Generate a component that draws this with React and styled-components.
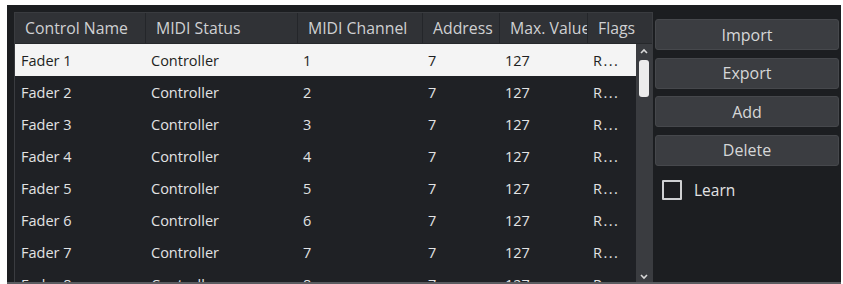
import React from "react";
import styled, { createGlobalStyle } from "styled-components";

const Global = createGlobalStyle`
  html, body { margin: 0; padding: 0; background: #ffffff; }
  body { font-family: "Open Sans", "Noto Sans", sans-serif; }
  * { box-sizing: border-box; }
`;

const Panel = styled.div`
  margin: 5px 2px 0 7px;
  height: 279px;
  background: #1c1e21;
  border-bottom: 2px solid #5a5c60;
  display: flex;
  align-items: flex-start;
  padding: 7px 0 0 7px;
  gap: 2px;
  overflow: hidden;
`;

const TableFrame = styled.div`
  width: 639px;
  height: 275px;
  border: 1px solid #3a3c40;
  border-bottom: none;
  background: #1f2125;
  display: flex;
  flex-direction: column;
  overflow: hidden;
`;

const cols = [131, 152, 125, 77, 88, 48];

const HeaderRow = styled.div`
  display: flex;
  height: 31px;
  background: #303236;
  border-bottom: 1px solid #26282b;
  flex-shrink: 0;
`;

const HeaderCell = styled.div`
  width: ${(p) => p.$w}px;
  flex: ${(p) => (p.$grow ? "1" : "none")};
  padding-left: 10px;
  display: flex;
  align-items: center;
  font-size: 15.8px;
  color: #cfd0d2;
  white-space: nowrap;
  overflow: hidden;
  border-right: ${(p) => (p.$grow ? "none" : "1px solid #24262a")};
`;

const Body = styled.div`
  display: flex;
  flex: 1;
  min-height: 0;
`;

const Rows = styled.div`
  width: 621px;
  display: flex;
  flex-direction: column;
`;

const Row = styled.div`
  display: flex;
  height: 32px;
  flex-shrink: 0;
  background: ${(p) => (p.$selected ? "#f4f4f4" : "transparent")};
  color: ${(p) => (p.$selected ? "#1e1f22" : "#e2e3e4")};
`;

const Cell = styled.div`
  width: ${(p) => p.$w}px;
  flex: none;
  padding-left: ${(p) => (p.$first ? 6 : 5)}px;
  display: flex;
  align-items: center;
  font-size: 14.5px;
  white-space: nowrap;
  overflow: hidden;
  letter-spacing: ${(p) => (p.$spaced ? "1.5px" : "normal")};
`;

const ScrollBar = styled.div`
  width: 16px;
  background: #3a3c40;
  display: flex;
  flex-direction: column;
  align-items: center;
  padding-top: 3px;
`;

const Arrow = styled.svg`
  width: 10px;
  height: 8px;
  flex-shrink: 0;
`;

const Thumb = styled.div`
  width: 10px;
  height: 37px;
  margin-top: 5px;
  border-radius: 3px;
  background: #ececec;
`;

const DownArrow = styled(Arrow)`
  margin-top: auto;
  margin-bottom: 6px;
`;

const Side = styled.div`
  width: 184px;
  padding-top: 7px;
  display: flex;
  flex-direction: column;
  gap: 7.5px;
`;

const Button = styled.button`
  height: 31px;
  background: #3b3d41;
  border: 1px solid #46484c;
  border-radius: 3px;
  color: #d6d7d8;
  font-family: "Open Sans", "Noto Sans", sans-serif;
  font-size: 16px;
  padding: 0;
  display: flex;
  align-items: center;
  justify-content: center;
`;

const LearnRow = styled.label`
  display: flex;
  align-items: center;
  gap: 12px;
  padding-left: 7px;
  margin-top: 5.5px;
  font-size: 15.5px;
  color: #e2e3e4;
`;

const Box = styled.span`
  width: 20px;
  height: 20px;
  border: 2px solid #cfd0d2;
  background: #1c1d20;
  border-radius: 1px;
`;

const headers = ["Control Name", "MIDI Status", "MIDI Channel", "Address", "Max. Value", "Flags"];

const data = Array.from({ length: 8 }, (_, i) => [
  `Fader ${i + 1}`,
  "Controller",
  String(i + 1),
  "7",
  "127",
  "R...",
]);

export default function App() {
  return (
    <>
      <Global />
      <Panel>
        <TableFrame>
          <HeaderRow>
            {headers.map((h, i) => (
              <HeaderCell key={h} $w={cols[i]} $grow={i === headers.length - 1}>
                {h}
              </HeaderCell>
            ))}
          </HeaderRow>
          <Body>
            <Rows>
              {data.map((r, ri) => (
                <Row key={ri} $selected={ri === 0}>
                  {r.map((c, ci) => (
                    <Cell key={ci} $w={cols[ci]} $first={ci === 0} $spaced={ci === 5}>
                      {c}
                    </Cell>
                  ))}
                </Row>
              ))}
            </Rows>
            <ScrollBar>
              <Arrow viewBox="0 0 10 8">
                <path d="M2 6 L5 3 L8 6" fill="none" stroke="#d8d8d8" strokeWidth="1.6" />
              </Arrow>
              <Thumb />
              <DownArrow viewBox="0 0 10 8">
                <path d="M2 2 L5 5 L8 2" fill="none" stroke="#d8d8d8" strokeWidth="1.6" />
              </DownArrow>
            </ScrollBar>
          </Body>
        </TableFrame>
        <Side>
          <Button>Import</Button>
          <Button>Export</Button>
          <Button>Add</Button>
          <Button>Delete</Button>
          <LearnRow>
            <Box />
            Learn
          </LearnRow>
        </Side>
      </Panel>
    </>
  );
}
